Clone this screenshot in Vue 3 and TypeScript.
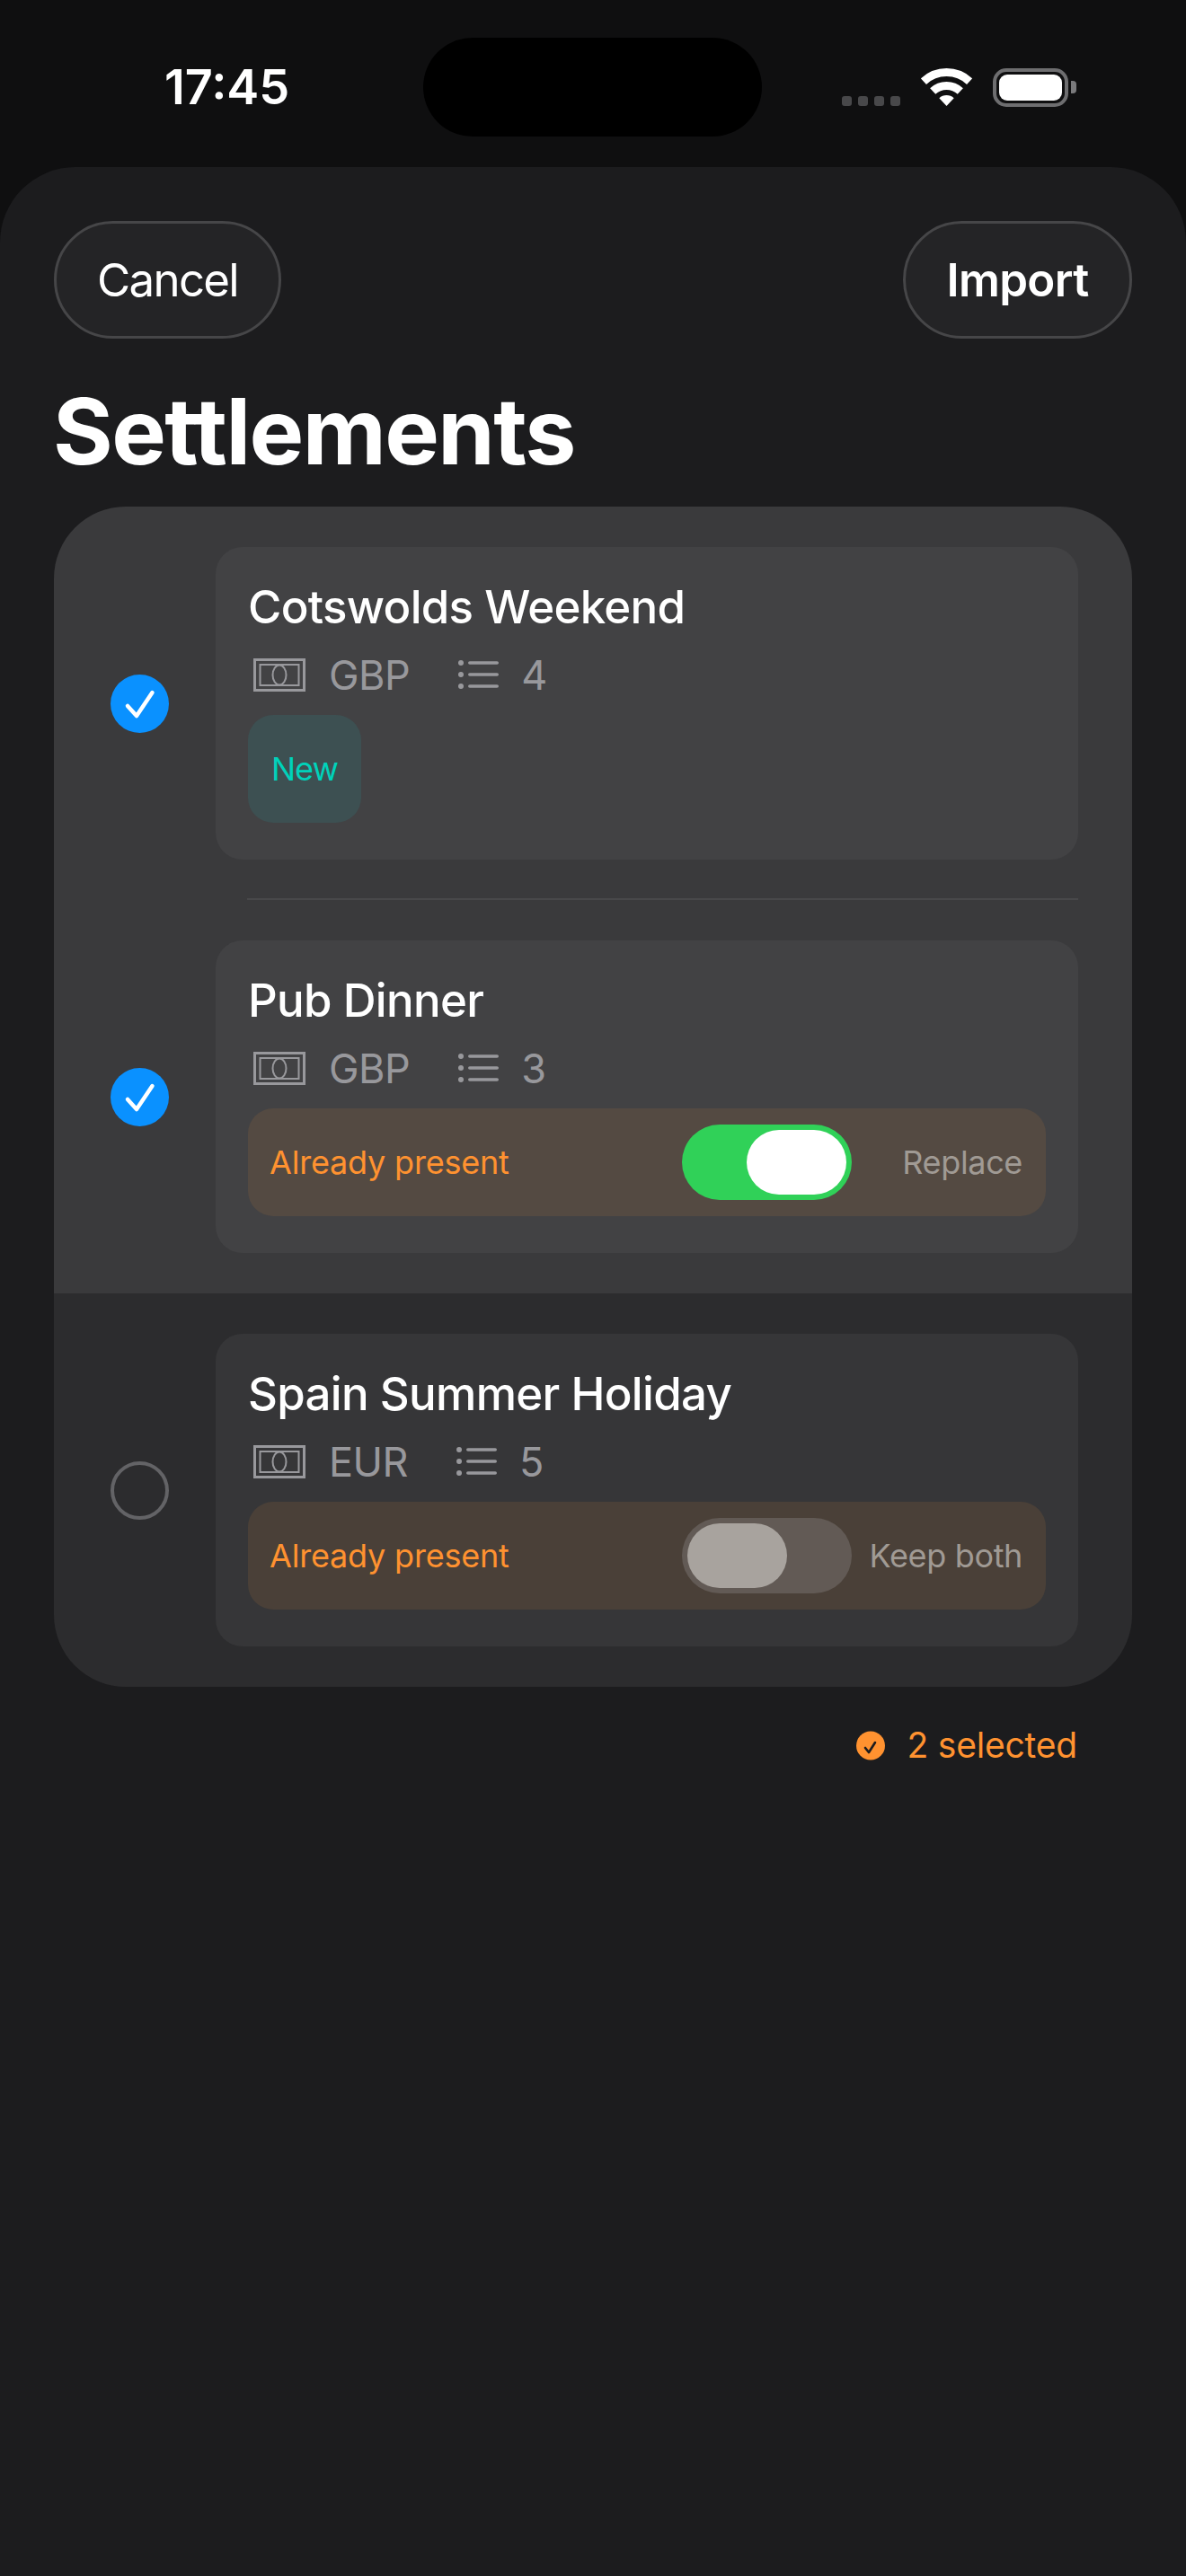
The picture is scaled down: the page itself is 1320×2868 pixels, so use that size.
<script setup lang="ts">
import { computed } from 'vue'

interface Settlement {
  name: string
  currency: string
  count: number
  selected: boolean
  status: 'new' | 'present'
  action?: string
  toggled?: boolean
}

const settlements: Settlement[] = [
  { name: 'Cotswolds Weekend', currency: 'GBP', count: 4, selected: true, status: 'new' },
  { name: 'Pub Dinner', currency: 'GBP', count: 3, selected: true, status: 'present', action: 'Replace', toggled: true },
  { name: 'Spain Summer Holiday', currency: 'EUR', count: 5, selected: false, status: 'present', action: 'Keep both', toggled: false },
]

const selectedCount = computed(() => settlements.filter((s) => s.selected).length)
</script>

<template>
  <div class="screen">
    <header class="status">
      <span class="time">17:45</span>
      <div class="island"></div>
      <div class="status-icons">
        <div class="signal"><i></i><i></i><i></i><i></i></div>
        <svg class="wifi" width="57" height="42" viewBox="0 0 57 42" fill="none">
          <path d="M2.9 14.6A37.5 37.5 0 0 1 54.1 14.6" stroke="#fff" stroke-width="9" />
          <path d="M13.2 25.5A22.5 22.5 0 0 1 43.8 25.5" stroke="#fff" stroke-width="9" />
          <path d="M28.5 42L20.3 33.2A12 12 0 0 1 36.7 33.2Z" fill="#fff" />
        </svg>
        <div class="battery"><div class="battery-fill"></div></div>
        <div class="battery-nub"></div>
      </div>
    </header>

    <main class="sheet">
      <nav class="nav">
        <button class="pill cancel">Cancel</button>
        <button class="pill import">Import</button>
      </nav>

      <h1 class="title">Settlements</h1>

      <section class="list">
        <div
          v-for="(item, i) in settlements"
          :key="item.name"
          class="row"
          :class="{ selected: item.selected }"
        >
          <div class="check" :class="{ on: item.selected }">
            <svg v-if="item.selected" width="65" height="65" viewBox="0 0 65 65" fill="none">
              <path d="M19 35L29 46L46.5 20" stroke="#fff" stroke-width="4.5" stroke-linecap="round" stroke-linejoin="round" />
            </svg>
          </div>

          <article class="card">
            <h2 class="name">{{ item.name }}</h2>
            <div class="meta">
              <svg class="money" width="58" height="37" viewBox="0 0 58 37" fill="none" stroke="currentColor">
                <rect x="1.5" y="1.5" width="55" height="34" stroke-width="3" />
                <rect x="7.5" y="7" width="43" height="23" stroke-width="2" />
                <ellipse cx="29" cy="18.5" rx="7.5" ry="11" stroke-width="2" />
              </svg>
              <span>{{ item.currency }}</span>
              <svg class="lines" width="45" height="32" viewBox="0 0 45 32" fill="currentColor">
                <circle cx="3" cy="3" r="3" />
                <circle cx="3" cy="16" r="3" />
                <circle cx="3" cy="29" r="3" />
                <rect x="11" y="1.2" width="34" height="3.6" rx="1.8" />
                <rect x="11" y="14.2" width="34" height="3.6" rx="1.8" />
                <rect x="11" y="27.2" width="34" height="3.6" rx="1.8" />
              </svg>
              <span>{{ item.count }}</span>
            </div>

            <div v-if="item.status === 'new'" class="badge">New</div>
            <div v-else class="conflict">
              <span class="present">Already present</span>
              <div class="toggle" :class="{ on: item.toggled }"><div class="knob"></div></div>
              <span class="action">{{ item.action }}</span>
            </div>
          </article>

          <div v-if="i === 0" class="divider"></div>
        </div>
      </section>

      <footer class="summary">
        <svg width="32" height="33" viewBox="0 0 32 33">
          <circle cx="16" cy="16.5" r="16" fill="#ff9230" />
          <path d="M10 19L14 24L21 13" fill="none" stroke="#1c1c1e" stroke-width="2.6" stroke-linecap="round" stroke-linejoin="round" />
        </svg>
        <span>{{ selectedCount }} selected</span>
      </footer>
    </main>
  </div>
</template>

<style>
html,
body {
  margin: 0;
  background: #0f0f10;
}
</style>

<style scoped>
.screen {
  width: 1320px;
  height: 2868px;
  overflow: hidden;
  background: #0f0f10;
  font-family: Inter, "Noto Sans", sans-serif;
  color: #fff;
}

.status {
  display: flex;
  align-items: center;
  box-sizing: border-box;
  height: 186px;
  padding: 8px 0 0 183px;
}
.time {
  width: 288px;
  font-size: 54px;
  font-weight: 600;
  line-height: 64px;
}
.island {
  width: 377px;
  height: 110px;
  border-radius: 55px;
  background: #000;
}
.status-icons {
  display: flex;
  align-items: flex-end;
  height: 43px;
  margin-left: 89px;
}
.signal {
  display: flex;
  gap: 7px;
  margin-bottom: 1px;
}
.signal i {
  width: 11px;
  height: 11px;
  border-radius: 3px;
  background: #48484a;
}
.wifi {
  margin: 0 23px 1px 23px;
}
.battery {
  box-sizing: border-box;
  width: 84px;
  height: 43px;
  padding: 3px;
  border: 4px solid #6e6e70;
  border-radius: 15px;
}
.battery-fill {
  height: 100%;
  border-radius: 9px;
  background: #fff;
}
.battery-nub {
  width: 6px;
  height: 14px;
  margin: 0 0 15px 3px;
  border-radius: 0 4px 4px 0;
  background: #7a7a7c;
}

.sheet {
  box-sizing: border-box;
  height: 2682px;
  padding: 60px 60px 0;
  border-radius: 84px 84px 0 0;
  background: #1c1c1e;
}

.nav {
  display: flex;
  justify-content: space-between;
}
.pill {
  box-sizing: border-box;
  height: 131px;
  border: 3px solid #464648;
  border-radius: 66px;
  background: #242426;
  color: #fff;
  font-family: inherit;
  font-size: 51px;
}
.cancel {
  width: 253px;
  font-weight: 400;
  letter-spacing: -1.7px;
}
.import {
  width: 255px;
  font-weight: 600;
  letter-spacing: -0.7px;
}

.title {
  height: 187px;
  margin: 0 0 0 -1px;
  font-size: 102px;
  font-weight: 700;
  letter-spacing: -1.6px;
  line-height: 206px;
}

.list {
  overflow: hidden;
  border-radius: 80px;
}
.row {
  position: relative;
  display: flex;
  align-items: center;
  box-sizing: border-box;
  height: 438px;
  padding: 0 60px 0 63px;
  background: #2c2c2e;
}
.row.selected {
  background: #3a3a3c;
}
.check {
  flex: none;
  box-sizing: border-box;
  width: 65px;
  height: 65px;
  margin-right: 52px;
  border: 4px solid #636366;
  border-radius: 50%;
}
.check.on {
  border: 0;
  background: #0a91ff;
}
.check svg {
  display: block;
}

.card {
  flex: 1;
  box-sizing: border-box;
  height: 348px;
  padding: 36px 36px 40px;
  border-radius: 30px;
  background: #363638;
}
.selected .card {
  background: #424244;
}
.name {
  margin: 0 0 20px 0;
  font-size: 51px;
  font-weight: 500;
  letter-spacing: -0.7px;
  line-height: 61px;
}
.meta {
  display: flex;
  align-items: center;
  height: 50px;
  margin-bottom: 20px;
  padding-left: 6px;
  color: #98989c;
  font-size: 45px;
  letter-spacing: -0.5px;
}
.money {
  margin-right: 26px;
}
.lines {
  margin: 0 25px 0 54px;
}

.badge {
  display: inline-block;
  box-sizing: border-box;
  height: 120px;
  padding: 0 26px;
  border-radius: 28px;
  background: #3d5052;
  color: #00d2ba;
  font-size: 36px;
  letter-spacing: -1px;
  line-height: 120px;
}

.conflict {
  display: flex;
  align-items: center;
  height: 120px;
  padding: 0 26px 0 24px;
  border-radius: 28px;
  background: #4a4038;
  font-size: 36px;
  letter-spacing: -0.2px;
}
.selected .conflict {
  background: #544a42;
}
.present {
  width: 459px;
  color: #ff9230;
}
.toggle {
  display: flex;
  box-sizing: border-box;
  width: 189px;
  height: 84px;
  padding: 6px;
  border-radius: 42px;
  background: #625a55;
}
.toggle.on {
  justify-content: flex-end;
  background: #30d158;
}
.knob {
  width: 111px;
  height: 72px;
  border-radius: 36px;
  background: #a8a39e;
}
.toggle.on .knob {
  background: #fff;
}
.action {
  flex: 1;
  color: #a09a94;
  letter-spacing: -0.35px;
  text-align: right;
}

.divider {
  position: absolute;
  right: 60px;
  bottom: 0;
  left: 215px;
  height: 2px;
  background: #48484a;
}

.summary {
  display: flex;
  align-items: center;
  justify-content: flex-end;
  gap: 24px;
  height: 34px;
  margin-top: 48px;
  padding-right: 61px;
  color: #ff9230;
  font-size: 39px;
  letter-spacing: -0.2px;
  line-height: 34px;
}
</style>
